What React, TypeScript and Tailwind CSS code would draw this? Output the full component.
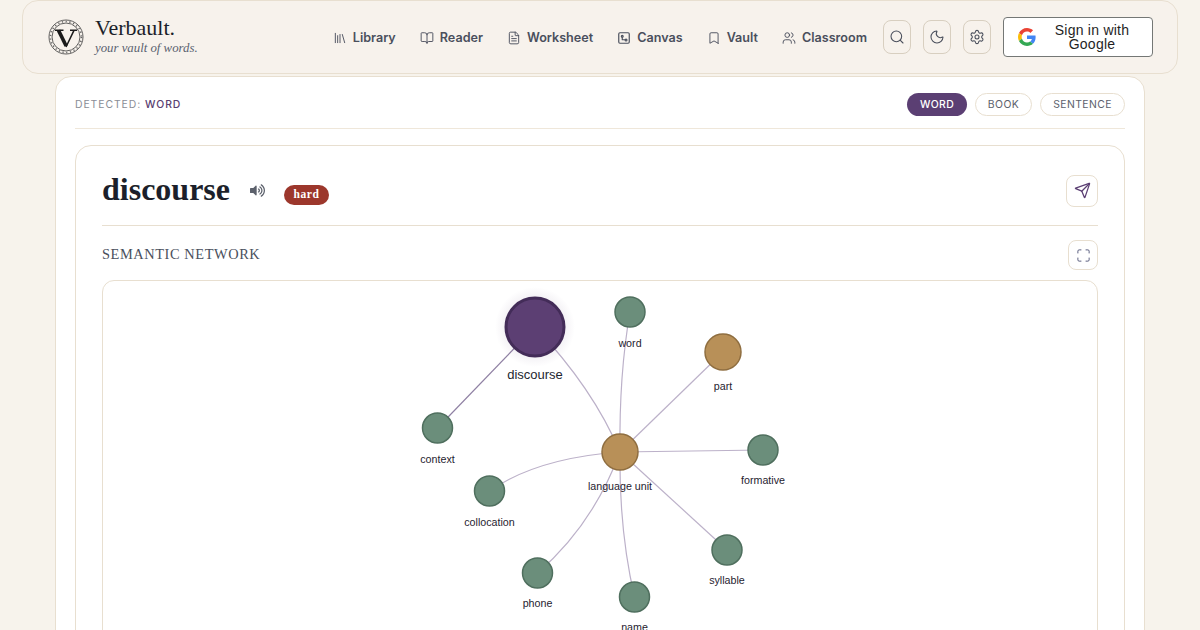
import { Library, BookOpen, FileText, Bookmark, Users, Search, Moon, Settings, Send, Maximize } from "lucide-react";
import { FaVolumeUp } from "react-icons/fa";

const nav = [
  { label: "Library", Icon: Library },
  { label: "Reader", Icon: BookOpen },
  { label: "Worksheet", Icon: FileText },
  { label: "Canvas", Icon: null },
  { label: "Vault", Icon: Bookmark },
  { label: "Classroom", Icon: Users },
];

const CanvasIcon = () => (
  <svg width="14" height="14" viewBox="0 0 24 24" fill="none" stroke="currentColor" strokeWidth="2" strokeLinecap="round" strokeLinejoin="round">
    <rect x="3" y="3" width="18" height="18" rx="2" />
    <circle cx="9" cy="9" r="1.6" />
    <path d="M9 11v4h4" />
    <circle cx="15.5" cy="15.5" r="1.6" />
  </svg>
);

const Logo = () => (
  <svg width="36" height="36" viewBox="0 0 36 36" fill="none">
    <circle cx="18" cy="18" r="17" stroke="#3a3a3a" strokeWidth="0.8" />
    <circle cx="18" cy="18" r="14" stroke="#3a3a3a" strokeWidth="0.8" />
    <circle cx="18" cy="18" r="15.5" stroke="#666" strokeWidth="1.6" strokeDasharray="1.2 2.6" />
    <path d="M7 11.2h8.5M22 11.2h7M26 11.4 18 28" stroke="#1a1a1a" strokeWidth="1.5" />
    <path d="M10.5 11.4 18.2 27" stroke="#1a1a1a" strokeWidth="3.6" />
  </svg>
);

const GoogleG = () => (
  <svg width="18" height="18" viewBox="0 0 48 48">
    <path fill="#EA4335" d="M24 9.5c3.54 0 6.71 1.22 9.21 3.6l6.85-6.85C35.9 2.38 30.47 0 24 0 14.62 0 6.51 5.38 2.56 13.22l7.98 6.19C12.43 13.72 17.74 9.5 24 9.5z" />
    <path fill="#4285F4" d="M46.98 24.55c0-1.57-.15-3.09-.38-4.55H24v9.02h12.94c-.58 2.96-2.26 5.48-4.78 7.18l7.73 6c4.51-4.18 7.09-10.36 7.09-17.65z" />
    <path fill="#FBBC05" d="M10.53 28.59c-.48-1.45-.76-2.99-.76-4.59s.27-3.14.76-4.59l-7.98-6.19C.92 16.46 0 20.12 0 24c0 3.88.92 7.54 2.56 10.78l7.97-6.19z" />
    <path fill="#34A853" d="M24 48c6.48 0 11.93-2.13 15.89-5.81l-7.73-6c-2.15 1.45-4.92 2.3-8.16 2.3-6.26 0-11.57-4.22-13.47-9.91l-7.98 6.19C6.51 42.62 14.62 48 24 48z" />
  </svg>
);

const green = { fill: "#6b8e7b", stroke: "#4f6f5e" };
const tan = { fill: "#b89058", stroke: "#8f6e40" };

const nodes = [
  { x: 334.5, y: 147, r: 15, ...green, label: "context", ly: 182 },
  { x: 386.5, y: 210, r: 15, ...green, label: "collocation", ly: 245 },
  { x: 434.5, y: 292, r: 15, ...green, label: "phone", ly: 326 },
  { x: 531.5, y: 316, r: 15, ...green, label: "name", ly: 350 },
  { x: 624, y: 269, r: 15, ...green, label: "syllable", ly: 303 },
  { x: 660, y: 169, r: 15, ...green, label: "formative", ly: 203 },
  { x: 527, y: 31, r: 15, ...green, label: "word", ly: 66 },
  { x: 620, y: 71, r: 18, ...tan, label: "part", ly: 109 },
  { x: 517, y: 171, r: 18, ...tan, label: "language unit", ly: 209 },
];

const edges = [
  "M432 46 Q490 107 517 171",
  "M527 31 Q516 94 517 171",
  "M620 71 L517 171",
  "M660 169 L517 171",
  "M624 269 L517 171",
  "M531.5 316 Q516 249 517 171",
  "M434.5 292 Q490 244 517 171",
  "M386.5 210 Q434 177 517 171",
];

export default function App() {
  return (
    <div className="h-screen overflow-hidden bg-[#f7f3ec] font-['Inter',sans-serif]">
      <header className="mx-[22px] h-[74px] rounded-2xl border border-[#e8dfd0] bg-[#f7f2ec] flex items-center pl-[25px] pr-[24px]">
        <Logo />
        <div className="ml-[11px] flex flex-col">
          <span className="font-['Liberation_Serif',serif] text-[22px] leading-[24px] text-[#1c1f2a] mt-[-4px]">Verbault.</span>
          <span className="font-['Liberation_Serif',serif] italic text-[12.8px] leading-[14px] text-[#5b6270] mt-[1px]">your vault of words.</span>
        </div>
        <nav className="ml-auto mt-[2px] flex items-center gap-[24px] text-[12.6px] font-semibold text-[#4a4f5c]">
          {nav.map(({ label, Icon }) => (
            <span key={label} className="flex items-center gap-[6px]">
              {Icon ? <Icon size={14} strokeWidth={1.6} /> : <CanvasIcon />}
              {label}
            </span>
          ))}
        </nav>
        <div className="ml-[16px] flex items-center gap-[12px] text-[#4a4f5c]">
          {[Search, Moon, Settings].map((I, i) => (
            <span key={i} className="w-[28px] h-[34px] rounded-lg border border-[#d8cfc0] flex items-center justify-center">
              <I size={16} strokeWidth={1.6} />
            </span>
          ))}
          <button className="w-[150px] h-[40px] rounded-[4px] border border-[#747775] bg-white flex items-center pl-[14px] pr-[4px] font-['Liberation_Sans',sans-serif] text-[14px] leading-[14px] tracking-[0.25px] text-[#1f1f1f]">
            <GoogleG />
            <span className="flex-1 text-center">Sign in with Google</span>
          </button>
        </div>
      </header>

      <main className="mx-[55px] mt-[2px] rounded-2xl border border-[#e8dfd0] bg-white px-[19px]">
        <div className="h-[52px] pt-[4px] flex items-center justify-between border-b border-[#efe7da]">
          <span className="text-[10.4px] tracking-[0.09em] text-[#8a8d96]">
            DETECTED: <span className="font-medium text-[#5a4070]">WORD</span>
          </span>
          <div className="flex items-center gap-[8px] text-[10.4px] tracking-[0.04em]">
            <span className="h-[23px] w-[60px] rounded-full bg-[#5b3f73] text-white font-medium flex items-center justify-center">WORD</span>
            <span className="h-[23px] w-[57px] rounded-full border border-[#e8dfd0] text-[#5c616c] flex items-center justify-center">BOOK</span>
            <span className="h-[23px] w-[85px] rounded-full border border-[#e8dfd0] text-[#5c616c] flex items-center justify-center">SENTENCE</span>
          </div>
        </div>

        <section className="mt-[16px] rounded-2xl border border-[#e8dfd0] px-[26px] h-[600px]">
          <div className="h-[80px] pt-[10px] flex items-center border-b border-[#e8dfd0]">
            <h1 className="font-['Liberation_Serif',serif] font-bold text-[32px] leading-none text-[#1c1f2a] mt-[-3px]">discourse</h1>
            <FaVolumeUp className="ml-[20px] text-[#5c616c]" size={15} />
            <span className="ml-[19px] mt-[8px] h-[20px] w-[45px] rounded-full bg-[#9c372c] text-white font-['Liberation_Serif',serif] font-bold text-[11.5px] tracking-[0.05em] flex items-center justify-center">hard</span>
            <span className="ml-auto w-[32px] h-[32px] rounded-lg border border-[#e8dfd0] flex items-center justify-center text-[#5b3f73]">
              <Send size={17} strokeWidth={1.8} />
            </span>
          </div>
          <div className="h-[54px] pt-[4px] flex items-center justify-between">
            <span className="font-['Liberation_Serif',serif] text-[14.4px] tracking-[0.04em] text-[#4a4f5c]">SEMANTIC NETWORK</span>
            <span className="w-[30px] h-[30px] rounded-lg border border-[#e8dfd0] flex items-center justify-center text-[#5b5f80]">
              <Maximize size={15} strokeWidth={1.6} />
            </span>
          </div>
          <div className="h-[400px] rounded-xl border border-[#e8dfd0] overflow-hidden">
            <svg width="994" height="398" viewBox="0 0 994 398" className="block">
              <defs>
                <radialGradient id="glow">
                  <stop offset="70%" stopColor="#5b3f73" stopOpacity="0.08" />
                  <stop offset="100%" stopColor="#5b3f73" stopOpacity="0" />
                </radialGradient>
              </defs>
              <path d="M432 46 L334.5 147" fill="none" stroke="#8f80a3" strokeWidth="1.2" />
              {edges.map((d) => (
                <path key={d} d={d} fill="none" stroke="#bcb1c9" strokeWidth="1.2" />
              ))}
              <circle cx="432" cy="46" r="40" fill="url(#glow)" />
              <circle cx="432" cy="46" r="29" fill="#5c3f73" stroke="#432c58" strokeWidth="3" />
              <text x="432" y="98" textAnchor="middle" fontSize="13" fontFamily="'Liberation Sans', sans-serif" fill="#23262f">discourse</text>
              {nodes.map((n) => (
                <g key={n.label}>
                  <circle cx={n.x} cy={n.y} r={n.r} fill={n.fill} stroke={n.stroke} strokeWidth="1.5" />
                  <text x={n.x} y={n.ly} textAnchor="middle" fontSize="10.7" fontFamily="'Liberation Sans', sans-serif" fill="#1f2330">{n.label}</text>
                </g>
              ))}
            </svg>
          </div>
        </section>
      </main>
    </div>
  );
}
